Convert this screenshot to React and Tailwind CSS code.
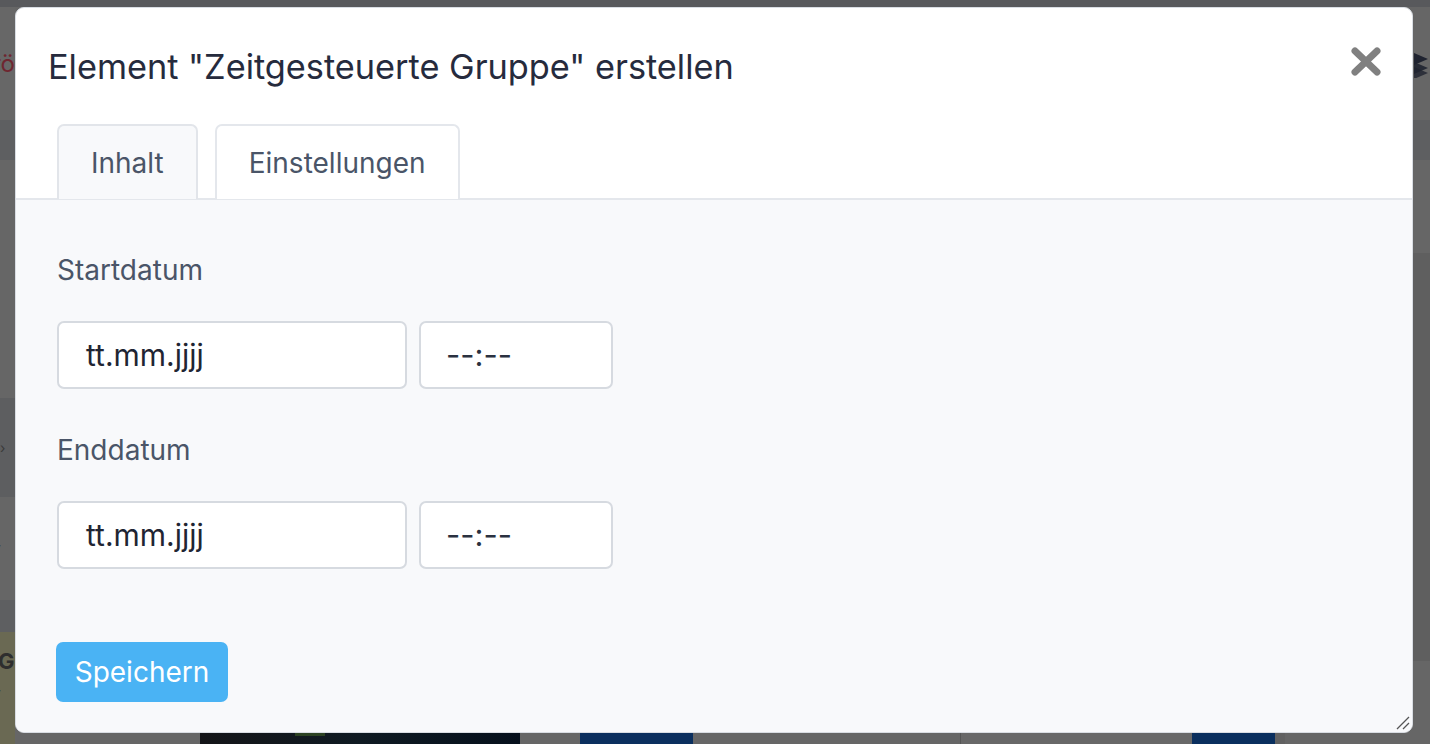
import React, { useState } from "react";

const FONT = { fontFamily: "Inter, 'Noto Sans', sans-serif" };

function LeftEdge() {
  return (
    <div className="flex w-[15px] flex-col overflow-hidden text-[#3a3a3a]">
      <div className="flex h-[113px] items-center justify-end bg-[#676767]">
        <span className="text-[24px] leading-none text-[#6f2630] whitespace-nowrap">rö</span>
      </div>
      <div className="h-[40px] bg-[#5e5f61]" />
      <div className="h-[238px] bg-[#666666]" />
      <div className="flex h-[99px] items-center bg-[#5d5e60]">
        <span className="text-[14px] leading-none">›</span>
      </div>
      <div className="flex h-[103px] items-center bg-[#666666]">
        <span className="-ml-[6px] text-[16px] leading-none">˅</span>
      </div>
      <div className="h-[32px] bg-[#5e5f61]" />
      <div className="flex flex-1 flex-col bg-[#6a6953] pt-[18px]">
        <span className="-ml-[2px] text-[22px] font-bold leading-none text-[#2e2e2e]">Gr</span>
        <span className="-ml-[6px] mt-[14px] text-[16px] leading-none">˅</span>
      </div>
    </div>
  );
}

function RightEdge() {
  return (
    <div className="flex w-[17px] flex-col overflow-hidden">
      <div className="flex h-[113px] items-start bg-[#666666] pl-[1px] pt-[43px]">
        <svg width="22" height="28" viewBox="0 0 22 28" className="shrink-0">
          <path d="M0 3 L14 9 L0 15 Z" fill="#1f2330" />
          <path d="M0 12 L14 18 L0 24 Z" fill="#1f2330" opacity="0.9" />
          <path d="M0 17 L14 23 L0 29 Z" fill="#1f2330" opacity="0.8" />
        </svg>
      </div>
      <div className="h-[40px] bg-[#5e5f61]" />
      <div className="h-[93px] bg-[#666666]" />
      <div className="h-[408px] bg-[#5f5f5f]" />
      <div className="flex-1 bg-[#666666]" />
    </div>
  );
}

function BottomStrip() {
  return (
    <div className="flex h-[11px]">
      <div className="w-[185px] bg-[#666666]" />
      <div className="relative w-[320px] bg-gradient-to-r from-[#141518] via-[#0f1a22] to-[#06101c]">
        <div className="absolute left-[95px] top-0 h-[3px] w-[30px] bg-[#2c4222]" />
      </div>
      <div className="w-[60px] bg-[#666666]" />
      <div className="w-[113px] bg-[#0b2f5e]" />
      <div className="w-[267px] bg-[#666666]" />
      <div className="w-[232px] border-l border-[#555] bg-[#686868]" />
      <div className="w-[83px] bg-[#0a2f5e]" />
      <div className="w-[10px] bg-[#616161]" />
      <div className="flex-1 bg-[#666666]" />
    </div>
  );
}

function CloseIcon() {
  return (
    <svg width="30" height="29" viewBox="0 0 30 29">
      <path d="M4 4 L26 25 M26 4 L4 25" stroke="#808080" strokeWidth="7" strokeLinecap="round" />
    </svg>
  );
}

function Field({ label, className = "" }) {
  return (
    <div className={className}>
      <div className="text-[28px] leading-[34px] text-[#4a5568]">{label}</div>
      <div className="mt-[34px] flex gap-[12px]">
        <div className="flex h-[68px] w-[350px] items-center rounded-[7px] border-2 border-[#d6dae0] bg-white pl-[27px] text-[30px] text-[#1f2533]">
          tt.mm.jjjj
        </div>
        <div className="flex h-[68px] w-[194px] items-center rounded-[7px] border-2 border-[#d6dae0] bg-white pl-[25px] text-[31px] text-[#2a3140]">
          --:--
        </div>
      </div>
    </div>
  );
}

export default function App() {
  const [tab, setTab] = useState("inhalt");
  const tabs = [
    { id: "inhalt", label: "Inhalt" },
    { id: "einstellungen", label: "Einstellungen" },
  ];

  return (
    <div className="relative h-[744px] w-full overflow-hidden bg-[#666666]" style={FONT}>
      {/* page behind the overlay */}
      <div className="flex h-full flex-col">
        <div className="h-[7px] bg-[#58595c]" />
        <div className="flex flex-1">
          <LeftEdge />
          <div className="flex flex-1 flex-col justify-end">
            <BottomStrip />
          </div>
          <RightEdge />
        </div>
      </div>

      {/* modal */}
      <div className="absolute left-[15px] top-[7px] flex h-[726px] w-[1398px] flex-col overflow-hidden rounded-[9px] border border-[#d9dde3] bg-white">
        <div className="relative px-[32px] pt-[39px]">
          <h1 className="text-[34.3px] leading-[40px] font-normal text-[#262b3d]">
            Element "Zeitgesteuerte Gruppe" erstellen
          </h1>
          <button className="absolute right-[31px] top-[39px]">
            <CloseIcon />
          </button>
          <div className="mt-[37px] flex gap-[17px] pl-[9px]">
            {tabs.map((t) => (
              <button
                key={t.id}
                onClick={() => setTab(t.id)}
                className={`-mb-[1px] flex h-[75px] items-center rounded-t-[7px] border-2 border-b-0 px-[32px] text-[28px] text-[#4a5568] ${
                  tab === t.id ? "border-[#e2e5ea] bg-[#f8f9fb]" : "border-[#e4e7ec] bg-white"
                }`}
              >
                {t.label}
              </button>
            ))}
          </div>
        </div>

        <div className="flex-1 border-t-2 border-[#e4e7ec] bg-[#f8f9fb] px-[41px] pt-[53px]">
          <Field label="Startdatum" />
          <Field label="Enddatum" className="mt-[44px]" />
          <button className="mt-[73px] h-[60px] w-[172px] rounded-[7px] bg-[#4ab3f4] text-[28px] text-white -ml-[1px]">
            Speichern
          </button>
        </div>

        <svg width="14" height="14" viewBox="0 0 14 14" className="absolute bottom-[2px] right-[2px]">
          <path d="M1 13 L13 1 M7 13 L13 7" stroke="#555" strokeWidth="1.3" />
        </svg>
      </div>
    </div>
  );
}
